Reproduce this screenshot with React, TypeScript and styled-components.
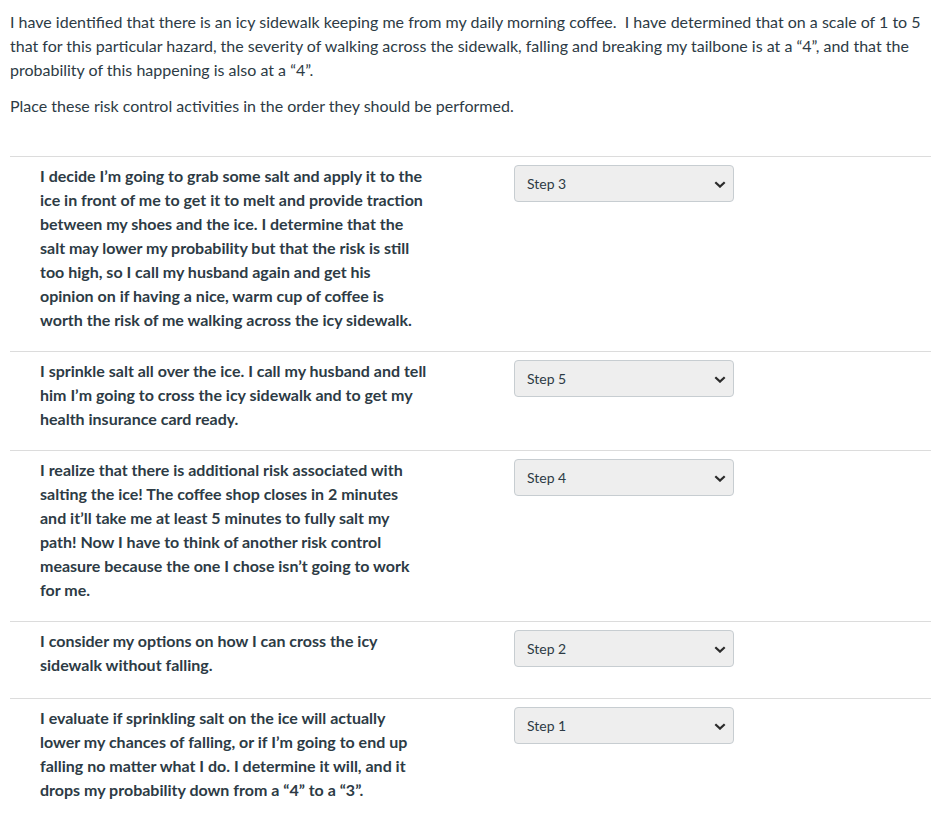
import * as React from 'react'
import styled, { createGlobalStyle } from 'styled-components'

const GlobalStyle = createGlobalStyle`
  html, body {
    margin: 0;
    padding: 0;
    background: #ffffff;
  }
  body {
    font-family: Lato, "Open Sans", "Liberation Sans", sans-serif;
    color: #2d3b45;
  }
`

const Page = styled.div`
  padding: 10px 9px 10px 10px;
  width: 939px;
  box-sizing: border-box;
`

const Paragraph = styled.p`
  margin: 0 0 12px 0;
  font-size: 16px;
  line-height: 24px;
  font-weight: 400;
`

const Answers = styled.div`
  margin-top: 38px;
`

const Row = styled.div`
  display: flex;
  align-items: flex-start;
  border-top: 1px solid #dcdcdc;
  padding: 7px 0 19px 0;
  width: 921px;
`

const Prompt = styled.div`
  flex: 0 0 460px;
  box-sizing: border-box;
  padding: 0 42px 0 30px;
  font-size: 16px;
  line-height: 24px;
  font-weight: 700;
`

const SelectBox = styled.div`
  margin: 1px 0 12px 44px;
  width: 220px;
  height: 37px;
  box-sizing: border-box;
  display: flex;
  align-items: center;
  justify-content: space-between;
  padding: 0 7px 0 12px;
  background: #eeeeee;
  border: 1px solid #c7cdd1;
  border-radius: 4px;
  font-size: 14px;
  color: #2d3b45;
`

const Chevron = styled.svg`
  width: 12px;
  height: 7px;
  margin-top: 1px;
`

interface Item {
  text: string
  step: number
}

const items: Item[] = [
  {
    text: 'I decide I\u2019m going to grab some salt and apply it to the ice in front of me to get it to melt and provide traction between my shoes and the ice. I determine that the salt may lower my probability but that the risk is still too high, so I call my husband again and get his opinion on if having a nice, warm cup of coffee is worth the risk of me walking across the icy sidewalk.',
    step: 3
  },
  {
    text: 'I sprinkle salt all over the ice. I call my husband and tell him I\u2019m going to cross the icy sidewalk and to get my health insurance card ready.',
    step: 5
  },
  {
    text: 'I realize that there is additional risk associated with salting the ice! The coffee shop closes in 2 minutes and it\u2019ll take me at least 5 minutes to fully salt my path! Now I have to think of another risk control measure because the one I chose isn\u2019t going to work for me.',
    step: 4
  },
  {
    text: 'I consider my options on how I can cross the icy sidewalk without falling.',
    step: 2
  },
  {
    text: 'I evaluate if sprinkling salt on the ice will actually lower my chances of falling, or if I\u2019m going to end up falling no matter what I do. I determine it will, and it drops my probability down from a \u201c4\u201d to a \u201c3\u201d.',
    step: 1
  }
]

function StepSelect({ step }: { step: number }) {
  return (
    <SelectBox>
      <span>Step {step}</span>
      <Chevron viewBox="0 0 12 7">
        <polyline points="1.3,1.2 6,5.6 10.7,1.2" fill="none" stroke="#2b2b2b" strokeWidth="2.2" />
      </Chevron>
    </SelectBox>
  )
}

export default function App() {
  return (
    <Page>
      <GlobalStyle />
      <Paragraph>
        I have identified that there is an icy sidewalk keeping me from my daily morning coffee.&nbsp; I have determined that on a scale of 1 to 5 that for this particular hazard, the severity of walking across the sidewalk, falling and breaking my tailbone is at a &ldquo;4&rdquo;, and that the probability of this happening is also at a &ldquo;4&rdquo;.
      </Paragraph>
      <Paragraph>Place these risk control activities in the order they should be performed.</Paragraph>
      <Answers>
        {items.map((item, i) => (
          <Row key={i}>
            <Prompt>{item.text}</Prompt>
            <StepSelect step={item.step} />
          </Row>
        ))}
      </Answers>
    </Page>
  )
}
